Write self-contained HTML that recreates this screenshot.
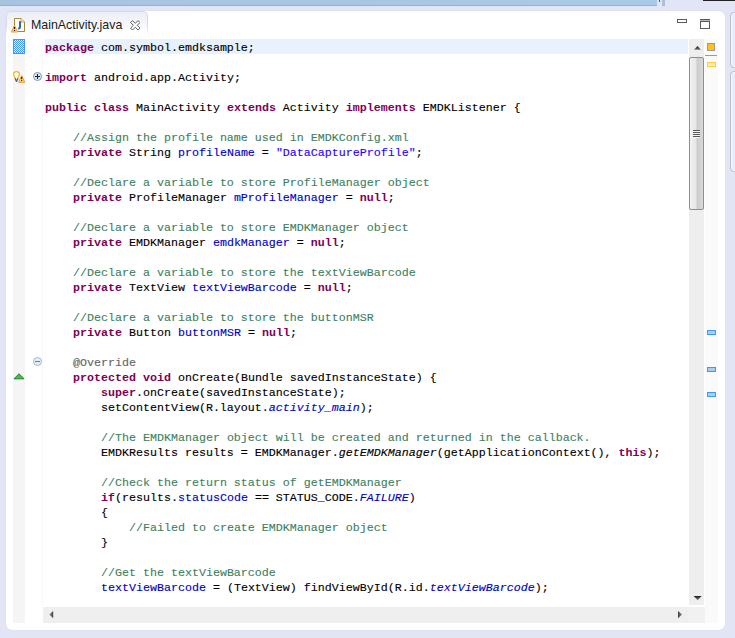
<!DOCTYPE html>
<html><head><meta charset="utf-8"><style>
html,body{margin:0;padding:0;}
body{width:735px;height:638px;overflow:hidden;background:#e1e5f6;position:relative;font-family:"Liberation Sans",sans-serif;}
div,svg,pre{position:absolute;}
#top1{left:0;top:0;width:657px;height:5px;background:linear-gradient(90deg,#a8c3df,#a9cae6);border-bottom:1px solid #9aaeca;}
#top2{left:662px;top:0;width:3px;height:6px;background:#a6c2df;}
#top3{left:659px;top:0;width:1px;height:2px;background:#555;}
#top4{left:703px;top:0;width:32px;height:1px;background:#222;}
#panel{left:6px;top:11px;width:719px;height:618.6px;background:#fff;border-radius:6px;box-shadow:0 0 1px 0 #c5c9dc;}
#rp1{left:730px;top:12px;width:12px;height:56px;background:#e8ebf9;border:1px solid #b9bdd0;border-radius:4px;box-sizing:border-box;box-shadow:inset 0 0 0 1px #fbfbff;}
#rp2{left:730px;top:71px;width:12px;height:101px;background:#e8ebf9;border:1px solid #b9bdd0;border-radius:4px;box-sizing:border-box;box-shadow:inset 0 0 0 1px #fbfbff;}
#tab{left:6px;top:11px;width:142px;height:24px;background:linear-gradient(#eceef6,#fff);border-radius:5px 5px 0 0;border:1px solid #d6d9e6;border-bottom:none;box-sizing:border-box;}
#tabfade{left:6px;top:24px;width:143px;height:12px;background:linear-gradient(rgba(255,255,255,0),#fff);}
#tabtxt{left:31px;top:18px;font-size:12.4px;line-height:15px;color:#1a1a1a;letter-spacing:0px;white-space:nowrap;}
#ruler{left:13px;top:39px;width:12px;height:583.6px;background:#f5f5f5;}
#sep{left:42px;top:39px;width:1px;height:568px;background:#f8f8f8;}
#hl{left:45px;top:39px;width:643px;height:15px;background:#e8f2fe;}
#chk{left:13px;top:39px;width:12px;height:15px;}
#code{left:45px;top:41px;margin:0;font-family:"Liberation Mono",monospace;font-size:11.67px;line-height:15px;color:#000;white-space:pre;-webkit-text-stroke:0.12px;}
.k{color:#7f0055;font-weight:bold;-webkit-text-stroke:0;}
.c{color:#3f7f5f;}
.f{color:#0000c0;}
.s{color:#2a00ff;}
.i{color:#0000c0;font-style:italic;}
.a{color:#646464;}
#vs{left:689.3px;top:39.4px;width:15.2px;height:566.1px;background:#eeeeee;}
#thumb{left:689px;top:57px;width:15px;height:153px;box-sizing:border-box;border:1px solid #8e8e8e;border-radius:2px;background:linear-gradient(90deg,#f2f2f2 0%,#e6e6e6 45%,#cdcdd0 55%,#d9d9da 100%);}
#ov{left:705px;top:39px;width:13px;height:583.6px;background:#fafafa;}
#hs{left:43px;top:607.4px;width:644.5px;height:15.2px;background:#efefef;}
#corner{left:687.5px;top:607.4px;width:17px;height:15.2px;background:#f1f1f1;}
.bm{left:707px;width:9px;height:5px;box-sizing:border-box;border:1px solid #3d9cf0;background:#a9cdf0;}
</style></head><body>
<div id="top1"></div><div id="top2"></div><div id="top3"></div><div id="top4"></div>
<div id="rp1"></div><div id="rp2"></div>
<div id="panel"></div>
<div id="tab"></div><div id="tabfade"></div>
<div id="tabtxt">MainActivity.java</div>
<div id="ruler"></div><div id="sep"></div>
<div id="hl"></div>
<pre id="code"><span class="k">package</span> com.symbol.emdksample;

<span class="k">import</span> android.app.Activity;

<span class="k">public</span> <span class="k">class</span> MainActivity <span class="k">extends</span> Activity <span class="k">implements</span> EMDKListener {

    <span class="c">//Assign the profile name used in EMDKConfig.xml</span>
    <span class="k">private</span> String <span class="f">profileName</span> = <span class="s">"DataCaptureProfile"</span>;

    <span class="c">//Declare a variable to store ProfileManager object</span>
    <span class="k">private</span> ProfileManager <span class="f">mProfileManager</span> = <span class="k">null</span>;

    <span class="c">//Declare a variable to store EMDKManager object</span>
    <span class="k">private</span> EMDKManager <span class="f">emdkManager</span> = <span class="k">null</span>;

    <span class="c">//Declare a variable to store the textViewBarcode</span>
    <span class="k">private</span> TextView <span class="f">textViewBarcode</span> = <span class="k">null</span>;

    <span class="c">//Declare a variable to store the buttonMSR</span>
    <span class="k">private</span> Button <span class="f">buttonMSR</span> = <span class="k">null</span>;

    <span class="a">@Override</span>
    <span class="k">protected</span> <span class="k">void</span> onCreate(Bundle savedInstanceState) {
        <span class="k">super</span>.onCreate(savedInstanceState);
        setContentView(R.layout.<span class="i">activity_main</span>);

        <span class="c">//The EMDKManager object will be created and returned in the callback.</span>
        EMDKResults results = EMDKManager.<i>getEMDKManager</i>(getApplicationContext(), <span class="k">this</span>);

        <span class="c">//Check the return status of getEMDKManager</span>
        <span class="k">if</span>(results.<span class="f">statusCode</span> == STATUS_CODE.<span class="i">FAILURE</span>)
        {
            <span class="c">//Failed to create EMDKManager object</span>
        }

        <span class="c">//Get the textViewBarcode</span>
        <span class="f">textViewBarcode</span> = (TextView) findViewById(R.id.<span class="i">textViewBarcode</span>);</pre>
<!-- checker marker -->
<svg id="chk" width="12" height="15" viewBox="0 0 12 15" shape-rendering="crispEdges"><defs><pattern id="cp" width="2" height="2" patternUnits="userSpaceOnUse"><rect width="2" height="2" fill="#e6f2ff"/><rect x="0" y="0" width="1" height="1" fill="#4099fb"/><rect x="1" y="1" width="1" height="1" fill="#4099fb"/></pattern></defs><rect width="12" height="15" fill="url(#cp)"/><path d="M0.5 0.5 H11.5 V14.5 H0.5 Z" fill="none" stroke="#4099fb" stroke-width="1"/></svg>
<!-- tab java icon -->
<svg style="left:10px;top:17px" width="17" height="17" viewBox="0 0 17 17">
<path d="M4.5 1.5 H11 L14.5 5 V14.5 H4.5 Z" fill="#fdfdfd" stroke="#a8862f" stroke-width="1"/>
<path d="M11 1.5 V5 H14.5" fill="#f4e7c4" stroke="#b6964a" stroke-width="0.8"/>
<path d="M10 4.3 V9.8 Q10 11.6 8.2 11.7" fill="none" stroke="#2a5fa6" stroke-width="1.9"/>
<path d="M4.5 8.4 L7.6 15 H1.4 Z" fill="#fbd974" stroke="#eaa236" stroke-width="1" stroke-linejoin="round"/>
<rect x="3.9" y="9.9" width="1.2" height="2" fill="#2a1000"/><rect x="3.9" y="12.9" width="1.2" height="1.1" fill="#2a1000"/>
</svg>
<!-- close X -->
<svg style="left:129.7px;top:19.7px" width="10.6" height="10.6" viewBox="0 0 11 11">
<path d="M0.6 2.6 L2.6 0.6 L5.5 3.5 L8.4 0.6 L10.4 2.6 L7.5 5.5 L10.4 8.4 L8.4 10.4 L5.5 7.5 L2.6 10.4 L0.6 8.4 L3.5 5.5 Z" fill="#fff" stroke="#4f4f4f" stroke-width="0.95" stroke-linejoin="miter"/>
</svg>
<!-- minimize / maximize -->
<div style="left:677px;top:19px;width:10px;height:4px;box-sizing:border-box;border:1px solid #5a5a5a;background:#fff;"></div>
<div style="left:700px;top:19px;width:10px;height:10px;box-sizing:border-box;border:1px solid #5a5a5a;background:#fff;"></div><div style="left:700px;top:20px;width:10px;height:1px;background:#b5b5b5;"></div><div style="left:700px;top:21px;width:10px;height:1px;background:#5a5a5a;"></div>
<!-- lightbulb + warning -->
<svg style="left:12px;top:70px" width="14" height="14" viewBox="0 0 14 14">
<path d="M4.5 1.5 C6.5 1.5 7.4 2.9 7.4 4.3 C7.4 5.7 6.3 6.6 5.7 8.5 L3.3 8.5 C2.7 6.6 1.6 5.7 1.6 4.3 C1.6 2.9 2.5 1.5 4.5 1.5 Z" fill="#fffdf0" stroke="#f3b31e" stroke-width="1.25" stroke-linejoin="round"/>
<path d="M3.3 8.4 H5.7" stroke="#fffdf0" stroke-width="1.4"/>
<path d="M3.3 8.7 L4.5 11.4 L5.7 8.7" fill="none" stroke="#4b60ae" stroke-width="1.3" stroke-linejoin="round" stroke-linecap="round"/>
<path d="M9.7 5.6 L12.7 12.3 H6.7 Z" fill="#fbe086" stroke="#e9982b" stroke-width="1" stroke-linejoin="round"/>
<rect x="9.1" y="7" width="1.1" height="2.2" fill="#2a1000"/><rect x="9.1" y="10.1" width="1.1" height="1" fill="#2a1000"/>
</svg>
<!-- fold plus -->
<svg style="left:33px;top:72px" width="9" height="9" viewBox="0 0 9 9">
<circle cx="4.5" cy="4.5" r="4" fill="#dfe9f6" stroke="#8193ad" stroke-width="1"/>
<path d="M2 4.5 H7 M4.5 2 V7" stroke="#15233f" stroke-width="1.1"/>
</svg>
<!-- fold minus -->
<svg style="left:33px;top:357px" width="9" height="9" viewBox="0 0 9 9">
<circle cx="4.5" cy="4.5" r="4" fill="#e6eef8" stroke="#a9b7cb" stroke-width="1"/>
<path d="M2 4.5 H7" stroke="#73839b" stroke-width="1.1"/>
</svg>
<!-- green override triangle -->
<svg style="left:13px;top:373px" width="12" height="7" viewBox="0 0 12 7">
<path d="M6 0.8 L11 5.8 H1 Z" fill="#5fb54a" stroke="#0d8a2b" stroke-width="1" stroke-linejoin="round"/>
</svg>
<!-- scrollbars -->
<div id="vs"></div><div id="ov"></div><div id="hs"></div><div id="corner"></div>
<div id="thumb"></div>
<svg style="left:692px;top:130px" width="9" height="8" viewBox="0 0 9 8"><path d="M0.5 1 H8 M0.5 3 H8 M0.5 5 H8 M0.5 7 H8" stroke="#555" stroke-width="1" opacity="0.0"/><rect x="1" y="0" width="7" height="1" fill="#555"/><rect x="1" y="1" width="7" height="1" fill="#f4f4f4"/><rect x="1" y="2" width="7" height="1" fill="#555"/><rect x="1" y="3" width="7" height="1" fill="#f4f4f4"/><rect x="1" y="4" width="7" height="1" fill="#555"/><rect x="1" y="5" width="7" height="1" fill="#f4f4f4"/><rect x="1" y="6" width="7" height="1" fill="#555"/><rect x="1" y="7" width="7" height="1" fill="#f4f4f4"/></svg>
<svg style="left:693px;top:45px" width="9" height="6" viewBox="0 0 9 6"><defs><linearGradient id="ga" x1="0" y1="0" x2="0" y2="1"><stop offset="0" stop-color="#111"/><stop offset="1" stop-color="#777"/></linearGradient></defs><path d="M4.5 1 L8 4.8 H1 Z" fill="url(#ga)"/></svg>
<svg style="left:693px;top:595px" width="9" height="6" viewBox="0 0 9 6"><defs><linearGradient id="gd" x1="0" y1="0" x2="0" y2="1"><stop offset="0" stop-color="#1a1a1a"/><stop offset="1" stop-color="#8a8a8a"/></linearGradient></defs><path d="M4.6 5.3 L8.6 1 H0.6 Z" fill="url(#gd)"/></svg>
<svg style="left:49px;top:611px" width="5" height="8" viewBox="0 0 5 8"><defs><linearGradient id="gl" x1="1" y1="0" x2="0" y2="0"><stop offset="0" stop-color="#3a3a3a"/><stop offset="1" stop-color="#9a9a9a"/></linearGradient></defs><path d="M0.3 3.6 L4.2 0 V7.2 Z" fill="url(#gl)"/></svg>
<svg style="left:678px;top:611px" width="5" height="8" viewBox="0 0 5 8"><defs><linearGradient id="gr" x1="0" y1="0" x2="1" y2="0"><stop offset="0" stop-color="#3a3a3a"/><stop offset="1" stop-color="#9a9a9a"/></linearGradient></defs><path d="M4.2 3.6 L0 0 V7.2 Z" fill="url(#gr)"/></svg>
<!-- overview ruler -->
<div style="left:707px;top:43px;width:8px;height:8px;box-sizing:border-box;border:1px solid #9f9b92;background:#fcc21b;"></div>
<div style="left:705px;top:55px;width:12px;height:1px;background:#9c9c9c;"></div>
<div style="left:707px;top:62px;width:9px;height:5px;box-sizing:border-box;border:1px solid #fad138;background:#fbeec6;"></div>
<div class="bm" style="top:330px"></div>
<div class="bm" style="top:367px"></div>
<div class="bm" style="top:392px"></div>
</body></html>
